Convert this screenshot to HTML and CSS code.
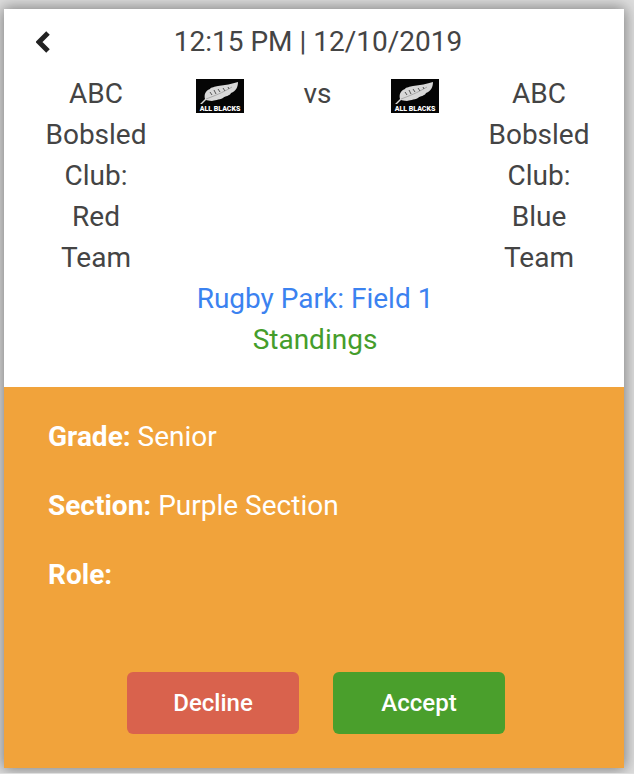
FILE: index.html
```html
<!DOCTYPE html>
<html lang="en">
<head>
  <meta charset="UTF-8">
  <meta name="viewport" content="width=device-width, initial-scale=1">
  <title>Match Details</title>
  <link rel="stylesheet" href="styles.css">
</head>
<body>

<!-- team logo, used on both sides -->
<svg class="sprite" aria-hidden="true">
  <symbol id="logo" viewBox="0 0 48 34">
    <rect width="48" height="34" fill="#050505"/>
    <path d="M4 25 L9 20 C8 16 9 12 14 10 C15 8 19 8 22 7 C29 6 36 5 42 3 C42 8 40 12 35 14 C34 17 29 17 27 19 C23 21 18 21 16 22 C13 22 11 21 10 21 L6 25 Z" fill="#d8d8d8"/>
    <path d="M10 20 C18 17 26 14 36 8" fill="none" stroke="#aaa" stroke-width="1"/>
    <path d="M14 13 L16 16 M18 11 L20 15 M22 10 L24 13 M27 9 L29 12 M32 8 L33 10" fill="none" stroke="#555" stroke-width="1"/>
    <text x="24" y="32" class="logo-text">ALL BLACKS</text>
  </symbol>
</svg>

<main class="card">
  <section class="match">
    <header class="match-header">
      <button class="back" type="button" aria-label="Back">
        <svg class="back-icon" viewBox="0 0 14 22" aria-hidden="true">
          <path d="M12 2 L3 11 L12 20" fill="none" stroke="#222" stroke-width="5"/>
        </svg>
      </button>
      <div class="match-time">12:15 PM | 12/10/2019</div>
    </header>

    <div class="teams">
      <div>ABC Bobsled Club: Red Team</div>
      <svg class="logo"><use href="#logo"/></svg>
      <div>vs</div>
      <svg class="logo"><use href="#logo"/></svg>
      <div>ABC Bobsled Club: Blue Team</div>
    </div>

    <a class="link venue" href="#">Rugby Park: Field 1</a>
    <a class="link standings" href="#">Standings</a>
  </section>

  <section class="details">
    <p><strong>Grade:</strong> Senior</p>
    <p><strong>Section:</strong> Purple Section</p>
    <p><strong>Role:</strong></p>
    <div class="actions">
      <button class="btn decline" type="button">Decline</button>
      <button class="btn accept" type="button">Accept</button>
    </div>
  </section>
</main>

</body>
</html>
```

FILE: styles.css
```css
* {
  box-sizing: border-box;
}
body {
  margin: 0;
  padding: 9px 10px 5px 4px;
  background-color: #dedede;
  color: #444;
  font-family: Roboto, sans-serif;
  font-size: 28px;
  line-height: 41px;
}
.sprite {
  display: none;
}
.card {
  background-color: #fff;
  box-shadow: 0 0 14px 1px rgba(0, 0, 0, 0.45);
}
.match {
  padding: 12px 30px 27px 32px;
  text-align: center;
}
.match-header {
  display: grid;
  grid-template-columns: 14px 1fr 8px;
  align-items: center;
  margin-bottom: 11px;
}
.back {
  display: flex;
  justify-content: center;
  padding: 0;
  border: none;
  background: none;
  cursor: pointer;
}
.back-icon {
  width: 14px;
  height: 22px;
}
.teams {
  display: grid;
  grid-template-columns: 110px 1fr 56px 1fr 110px;
  justify-items: center;
  padding-left: 5px;
}
.logo {
  width: 48px;
  height: 34px;
  margin-top: 6px;
}
.logo-text {
  fill: #fff;
  font-size: 7px;
  font-weight: 900;
  text-anchor: middle;
}
.link {
  display: block;
  text-decoration: none;
}
.venue {
  color: #3b82f0;
}
.standings {
  color: #459d2b;
}
.details {
  padding: 29px 40px 34px 44px;
  background-color: #f1a33b;
  color: #fff;
}
.details p {
  margin: 0 0 28px;
}
.actions {
  display: flex;
  justify-content: center;
  gap: 34px;
  padding-top: 49px;
}
.btn {
  width: 172px;
  height: 62px;
  border: none;
  border-radius: 6px;
  color: #fff;
  font-family: inherit;
  font-size: 24px;
  font-weight: 500;
  cursor: pointer;
}
.decline {
  background-color: #d9624d;
}
.accept {
  background-color: #4a9f2c;
}
```
